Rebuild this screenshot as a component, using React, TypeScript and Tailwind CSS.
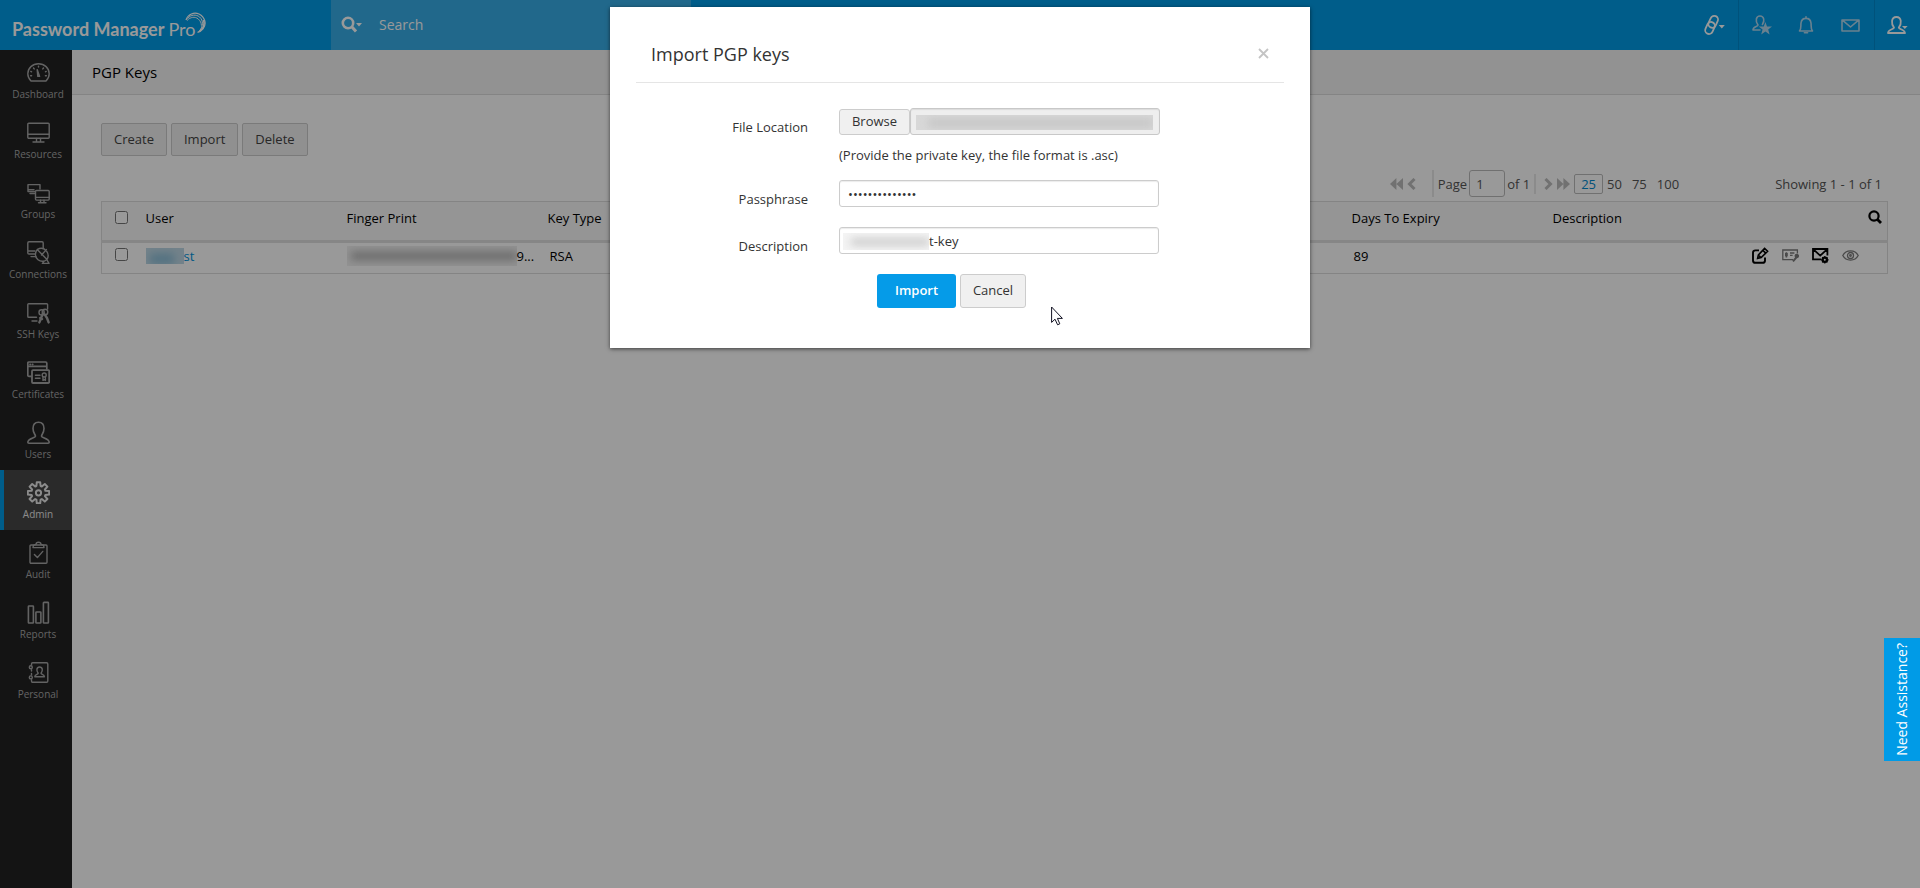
import React, { useState } from 'react';

const svgProps = {
  fill: 'none',
  stroke: 'currentColor',
  strokeWidth: 1.4,
  strokeLinejoin: 'round' as const,
  strokeLinecap: 'round' as const,
};

const USER_PATH = 'M8.5 15.2 C8.5 13.6 6 12 6 7.5 C6 3.5 8.2 1.2 11.5 1.2 S17 3.5 17 7.5 C17 12 14.5 13.6 14.5 15.2 C14.5 17 22.2 17.4 22.2 21.3 C22.2 22 21.8 22.2 21 22.2 H2 C1.2 22.2 .8 22 .8 21.3 C.8 17.4 8.5 17 8.5 15.2 Z';

const navItems = [
  {
    label: 'Dashboard',
    icon: (
      <>
        <path d="M4 20 C1.5 17.5 .8 15 .8 12.8 C.8 7 5.5 2.8 11.5 2.8 S22.2 7 22.2 12.8 C22.2 15 21.5 17.5 19 20 Z" />
        <path d="M10.2 8.6 L10.8 15.4 L12.6 15.4 Z M11.5 5.1 V6 M6.5 7 L7.2 7.9 M16.5 7 L15.8 7.9 M3.8 10.4 L4.6 10.8 M19.2 10.4 L18.4 10.8 M3.6 14.8 H4.6 M18.4 14.8 H19.4" />
      </>
    ),
  },
  {
    label: 'Resources',
    icon: (
      <>
        <rect x=".8" y="2.2" width="21.4" height="15" rx="1" />
        <path d="M1 13.2 H22 M9.5 17.4 V20.4 M13.5 17.4 V20.4 M6 21 H17" />
      </>
    ),
  },
  {
    label: 'Groups',
    icon: (
      <>
        <path d="M8 10.5 H1 V3.6 H13 V8 M1.5 8.6 H7 M3 12.5 H7.5" />
        <rect x="8.5" y="9.5" width="13.7" height="9.6" rx="1" />
        <path d="M8.8 16.4 H22 M13.5 19.2 V21.4 M17 19.2 V21.4 M11.5 21.8 H19" />
      </>
    ),
  },
  {
    label: 'Connections',
    icon: (
      <>
        <path d="M8 13 H2 C1.2 13 .8 12.6 .8 12 V2 C.8 1.2 1.2 .8 2 .8 H15 C15.8 .8 16.2 1.2 16.2 2 V7 M1 10 H8 M4 15.6 H9" />
        <path d="M10.2 8.6 C7.5 12 8 16.5 11 18.8 C14 21 18 20.6 20 18.4 Z M10.2 8.6 C14 6.5 17.5 7.5 19.6 10.2 C21.5 13 21.5 16 20 18.4 M14.5 14 L19.4 8.6 M17 20.4 L15.4 22.4 H22 L20 19" />
      </>
    ),
  },
  {
    label: 'SSH Keys',
    icon: (
      <>
        <path d="M9.5 16.2 H1.6 C1 16.2 .8 16 .8 15.4 V3.6 C.8 3 1 2.8 1.6 2.8 H19.6 C20.4 2.8 20.6 3 20.6 3.6 V8 M5 20 H10" />
        <path strokeWidth="2.4" d="M16 12.4 L12.4 21.4 M17.6 13.4 L20 17 L21.6 21.4 M13.2 17 L15 18" />
        <circle cx="14.6" cy="11.4" r="2.6" />
        <circle cx="18" cy="11" r="2.8" />
      </>
    ),
  },
  {
    label: 'Certificates',
    icon: (
      <>
        <path d="M4 15.4 H2 C1.2 15.4 .8 15 .8 14.2 V2.2 C.8 1.4 1.2 1 2 1 H18.6 C19.4 1 19.8 1.4 19.8 2.2 V8 M1 5.4 H19.8 M3 3.3 H3.4 M5.4 3.3 H5.8" strokeWidth="1.7" />
        <rect x="5" y="9.2" width="17.2" height="12.8" rx="1" strokeWidth="1.8" />
        <path d="M8.4 14.2 H13 M8.4 17.2 H13 M16 16 V19.4 L17.2 18.6 L18.4 19.4 V16" />
        <circle cx="17.2" cy="14" r="2" />
      </>
    ),
  },
  { label: 'Users', icon: <path d={USER_PATH} strokeWidth="1.6" /> },
  {
    label: 'Admin',
    icon: (
      <g strokeWidth="2">
        <path d="M9.8 1.2 H13.2 L13.6 5 L14.8 5.5 L17.8 3 L20.4 5.6 L17.9 8.5 L18.4 9.8 L22.2 10.1 V13.5 L18.4 13.9 L17.9 15.1 L20.4 18 L17.8 20.6 L14.8 18.1 L13.6 18.6 L13.2 22.3 H9.8 L9.4 18.6 L8.2 18.1 L5.2 20.6 L2.6 18 L5.1 15.1 L4.6 13.9 L.8 13.5 V10.1 L4.6 9.8 L5.1 8.5 L2.6 5.6 L5.2 3 L8.2 5.5 L9.4 5 Z" />
        <circle cx="11.5" cy="11.8" r="2.6" />
      </g>
    ),
  },
  {
    label: 'Audit',
    icon: (
      <>
        <rect x="3" y="4" width="17" height="18.2" rx="1" />
        <path d="M6.4 4.4 L6 6.6 H17 L16.6 4.4 L14 3.4 C13.8 .6 9.2 .6 9 3.4 Z M7.4 13.4 L10.4 16.6 L15.8 10.4" />
      </>
    ),
  },
  {
    label: 'Reports',
    icon: (
      <g strokeWidth="1.6">
        <rect x="1.4" y="5" width="5" height="17" rx=".6" />
        <rect x="8.9" y="11" width="5" height="11" rx=".6" />
        <rect x="16.4" y="1.4" width="5" height="20.6" rx=".6" />
      </g>
    ),
  },
  {
    label: 'Personal',
    icon: (
      <>
        <path d="M4.5 4 V3 C4.5 2.2 5 1.8 5.6 1.8 H19.6 C20.4 1.8 20.8 2.2 20.8 3 V20 C20.8 20.8 20.4 21.2 19.6 21.2 H5.6 C5 21.2 4.5 20.8 4.5 20 V18.6 M4.5 8.6 V10 M4.5 12.4 V14" />
        <circle cx="3.8" cy="6.2" r="1.5" />
        <circle cx="3.8" cy="16.4" r="1.5" />
        <path d="M11.2 12.2 C9 9.6 9.6 6 12.6 6 S16.2 9.6 14 12.2 C14.2 13.6 17.4 13 17.4 15.8 H7.8 C7.8 13 11 13.6 11.2 12.2 Z" />
      </>
    ),
  },
];

function Sidebar() {
  return (
    <nav className="w-[72px] shrink-0 bg-[#222222]">
      {navItems.map((item) => {
        const active = item.label === 'Admin';
        return (
          <a
            key={item.label}
            href="#"
            className={`flex h-[60px] flex-col items-center border-l-4 pt-[11px] ${
              active ? 'border-[#009be7] bg-[#464646] text-[#e8e8e8]' : 'border-transparent text-[#a6a6a6]'
            }`}
          >
            <svg width="23" height="23" viewBox="0 0 23 23" {...svgProps}>{item.icon}</svg>
            <span className="mt-0.5 text-[10px] leading-4 whitespace-nowrap">{item.label}</span>
          </a>
        );
      })}
    </nav>
  );
}

function Header() {
  return (
    <header className="flex h-[50px] items-stretch bg-[#009be7] text-white">
      <div className="flex w-[331px] shrink-0 items-center pl-3">
        <span className="mt-2 font-['Lato',sans-serif] text-lg leading-6 font-bold whitespace-nowrap">
          Password Manager <span className="font-normal">Pro</span>
        </span>
        <svg className="-ml-2.5 mb-1" width="22" height="22" viewBox="0 0 22 22" fill="none" stroke="currentColor">
          <path d="M1 8 C3 2 9 0 14 2 C20 5 22 12 18 17 C16.5 19 15 19.8 12.5 20.4" strokeWidth="1.2" />
          <path d="M2.5 6.5 C6 2.4 11 2.2 14.6 5 C18.6 8.4 18.6 14.6 13.5 20" strokeWidth="1" />
          <path d="M2 8.6 C5.4 4.8 10 4.4 13 6.8 C15.4 8.8 16.4 11 16.4 13.6" strokeWidth=".9" />
          <path d="M18.6 8 C19.8 12 18.6 16.4 14.6 19.2" strokeWidth="1.6" />
        </svg>
      </div>
      <div className="flex w-[360px] shrink-0 items-center bg-[#37aee8] pl-2.5">
        <button aria-label="Search scope" className="flex items-center">
          <svg width="22" height="18" viewBox="0 0 22 18" fill="none" stroke="currentColor">
            <circle cx="7" cy="7" r="5.2" strokeWidth="2.6" />
            <path d="M11 11 L15 15.6" strokeWidth="3" />
            <path d="M15 7 H21 L18 10.4 Z" fill="currentColor" stroke="none" />
          </svg>
        </button>
        <input
          aria-label="Search"
          placeholder="Search"
          className="ml-4 w-60 bg-transparent text-sm outline-none placeholder:text-white"
        />
      </div>
      <div className="ml-auto flex items-center">
        <button aria-label="Links" className="flex w-12 justify-center">
          <svg width="22" height="22" viewBox="0 0 22 22" {...svgProps} strokeWidth="1.8">
            <rect x="6.4" y="1.6" width="7.6" height="12.4" rx="3.8" transform="rotate(25 10.2 7.8)" />
            <rect x="3.2" y="7.8" width="7.6" height="12.4" rx="3.8" transform="rotate(25 7 14)" />
            <path d="M15.8 11 H21.8 L18.8 14.6 Z" fill="currentColor" stroke="none" />
          </svg>
        </button>
        <div className="flex h-full items-center border-x border-[#0089cd] text-[#b0d8ee]">
          <button aria-label="Favorites" className="flex w-[45px] justify-center">
            <svg width="20" height="20" viewBox="0 0 20 20" {...svgProps} strokeWidth="1.6">
              <path d="M8 15 H1 C1 11 6 12 6 10 C3 6 4 1 8 1 S13 6 10.4 9.4" />
              <path d="M13.4 7 L15 11.6 H20 L16.2 14.6 L17.6 19.6 L13.4 16.6 L9.2 19.6 L10.6 14.6 L6.8 11.6 H11.8 Z" fill="currentColor" stroke="none" />
            </svg>
          </button>
          <button aria-label="Notifications" className="flex w-[43px] justify-center">
            <svg width="16" height="18" viewBox="0 0 16 18" {...svgProps} strokeWidth="1.6">
              <path d="M1.5 15 C3.5 12.5 2.6 10 3 7 C3.4 3.8 5.4 2.4 8 2.4 S12.6 3.8 13 7 C13.4 10 12.5 12.5 14.5 15 Z M8 .8 V2.2 M6.4 16.8 H9.6" />
            </svg>
          </button>
          <button aria-label="Messages" className="flex w-[47px] justify-center">
            <svg width="19" height="13" viewBox="0 0 19 13" {...svgProps} strokeWidth="1.6">
              <path d="M1 1 H18 V12 H1 Z M2 1.6 L9.5 8 L17 1.6" />
            </svg>
          </button>
        </div>
        <button aria-label="Account" className="flex w-[45px] justify-center">
          <svg width="21" height="18" viewBox="0 0 21 18" {...svgProps} strokeWidth="1.8">
            <path d="M7 11.6 C4 8 4 1 9.4 1 S14.8 8 11.8 11.6 C12 13.6 17.6 13 18 17 H1 C1.2 13 6.8 13.6 7 11.6 Z" />
            <path d="M15 10 H20.6 L17.8 13 Z" fill="currentColor" stroke="none" />
          </svg>
        </button>
      </div>
    </header>
  );
}

function Pager() {
  return (
    <div className="flex items-center text-[13px] leading-5 text-[#555555]">
      <div className="flex items-center gap-1">
        <button aria-label="First page">
          <svg width="13" height="12" viewBox="0 0 13 12" fill="#bdbdbd"><path d="M6.4 0 L0 6 L6.4 12 Z M13 0 L6.4 6 L13 12 Z" /></svg>
        </button>
        <button aria-label="Previous page">
          <svg width="9" height="12" viewBox="0 0 9 12" fill="none" stroke="#bdbdbd" strokeWidth="3"><path d="M7.5 1 L2.5 6 L7.5 11" /></svg>
        </button>
      </div>
      <label className="ml-4 flex items-center border-l-2 border-[#e8e8e8] pl-1">
        Page
        <input defaultValue="1" className="ml-0.5 h-[27px] w-9 rounded-[3px] border border-[#bbbbbb] px-1.5 text-[13px]" />
      </label>
      <span className="ml-0.5 border-r-2 border-[#e8e8e8] pr-1">of 1</span>
      <div className="ml-2 flex items-center gap-1">
        <button aria-label="Next page">
          <svg width="9" height="12" viewBox="0 0 9 12" fill="none" stroke="#bdbdbd" strokeWidth="3"><path d="M1.5 1 L6.5 6 L1.5 11" /></svg>
        </button>
        <button aria-label="Last page">
          <svg width="13" height="12" viewBox="0 0 13 12" fill="#bdbdbd"><path d="M0 0 L6.4 6 L0 12 Z M6.4 0 L13 6 L6.4 12 Z" /></svg>
        </button>
      </div>
      <button className="ml-1 h-5 rounded-xs border border-[#bbbbbb] px-1.5 leading-4 text-[#0089cd]">25</button>
      <div className="ml-1 flex items-center gap-2.5">
        <button>50</button>
        <button>75</button>
        <button>100</button>
      </div>
      <span className="ml-24 whitespace-nowrap">Showing 1 - 1 of 1</span>
    </div>
  );
}

function RowActions() {
  return (
    <div className="flex items-center gap-[13px] pl-2">
      <button aria-label="Edit">
        <svg width="17" height="17" viewBox="0 0 17 17" fill="none" stroke="#000" strokeWidth="1.9">
          <path d="M7 3.4 H3.4 Q1 3.4 1 5.8 V13.4 Q1 15.8 3.4 15.8 H10.6 Q13 15.8 13 13.4 V10.4" />
          <path d="M5.6 11.4 L6.4 8 L12.6 1.4 L15.6 4.2 L9.2 10.6 Z" strokeWidth="1.6" />
          <path d="M10.8 3.4 L13.8 6.2 M7 8.6 L8.6 10.2" strokeWidth="1.6" />
        </svg>
      </button>
      <button aria-label="View details">
        <svg width="17" height="13" viewBox="0 0 17 13" fill="none" stroke="#7c7c7c" strokeWidth="1.3">
          <path d="M11 10.6 H.8 V1 H15.4 V4.4" />
          <path d="M4.4 3.2 V8.6 M3 4.8 H5.8 M3 6.4 H5.8" strokeWidth="1.6" />
          <path d="M8 4 H12.4 M8 6.4 H10.6" />
          <path d="M11 12.4 L14.4 8.4" strokeWidth="2" />
          <circle cx="14.8" cy="7" r="1.6" fill="#7c7c7c" />
        </svg>
      </button>
      <button aria-label="Email key">
        <svg width="17" height="17" viewBox="0 0 17 17" fill="none" stroke="#000" strokeWidth="1.8">
          <path d="M9 12.4 H1 V2 H15.4 V8.4 M1.4 2.4 L8.2 8.6 L15 2.4" />
          <circle cx="12.8" cy="12.8" r="2.2" strokeWidth="2.2" />
          <path d="M12.8 9 V16.6 M9 12.8 H16.6 M10.2 10.2 L15.4 15.4 M15.4 10.2 L10.2 15.4" strokeWidth="1.2" />
          <circle cx="12.8" cy="12.8" r="1" fill="#fff" stroke="none" />
        </svg>
      </button>
      <button aria-label="View key">
        <svg width="17" height="11" viewBox="0 0 17 11" fill="none" stroke="#7c7c7c" strokeWidth="1.3">
          <path d="M.8 5.5 C4 -.6 13 -.6 16.2 5.5 C13 11.6 4 11.6 .8 5.5 Z" />
          <circle cx="8.5" cy="5.5" r="3" />
          <circle cx="8.5" cy="5.5" r=".8" />
        </svg>
      </button>
    </div>
  );
}

function KeysTable() {
  return (
    <table className="w-full table-fixed border border-[#dcdcdc] text-left text-[13px] leading-5 text-black">
      <thead>
        <tr className="h-10 border-b-3 border-[#e0e0e0] bg-[#f8f8f8]">
          <th className="w-[44px] pb-2 pl-[13px]"><input type="checkbox" aria-label="Select all" className="block size-[13px]" /></th>
          <th className="w-[201px] pb-1.5 font-normal">User</th>
          <th className="w-[201px] pb-1.5 font-normal">Finger Print</th>
          <th className="w-[201px] pb-1.5 font-normal">Key Type</th>
          <th colSpan={3} className="w-[603px]"></th>
          <th className="w-[201px] pb-1.5 font-normal">Days To Expiry</th>
          <th className="pb-1.5 font-normal">Description</th>
          <th className="w-[144px] pr-[5px] pb-2">
            <button aria-label="Search table" className="ml-auto block">
              <svg width="14" height="14" viewBox="0 0 14 14" fill="none" stroke="#000" strokeWidth="2.2">
                <circle cx="6" cy="6" r="4.6" />
                <path d="M9 9 L13 13" strokeWidth="2.8" />
              </svg>
            </button>
          </th>
        </tr>
      </thead>
      <tbody>
        <tr className="h-8">
          <td className="pb-2 pl-[13px]"><input type="checkbox" aria-label="Select key" className="block size-[13px]" /></td>
          <td className="pb-1">
            <a href="#" className="flex items-center text-[#0094dd]">
              <span className="h-4 w-[38px] overflow-hidden bg-[#c0d9e6]">
                <span className="mt-1.5 ml-1 block h-2.5 w-6 bg-[#86bbd6] blur-[4px]" />
              </span>
              st
            </a>
          </td>
          <td className="pb-1">
            <div className="flex items-center">
              <span className="h-5 w-[170px] overflow-hidden bg-[#f4f4f4]">
                <span className="mt-1.5 ml-1 block h-2 bg-[#adadad] blur-[4px]" />
              </span>
              9...
            </div>
          </td>
          <td className="pb-1 pl-0.5">RSA</td>
          <td colSpan={3}></td>
          <td className="pb-1 pl-0.5">89</td>
          <td></td>
          <td className="pb-1.5"><RowActions /></td>
        </tr>
      </tbody>
    </table>
  );
}

const labelClass = 'w-[172px] shrink-0 pt-[9px] text-right leading-5';
const fieldClass = 'block h-[27px] w-80 rounded-[3px] border border-[#cccccc] shadow-[inset_0_1px_1px_rgba(0,0,0,0.08)] outline-none';

function ImportDialog() {
  const [passphrase, setPassphrase] = useState('privatekeypass');
  const [description, setDescription] = useState('t-key');

  return (
    <div
      role="dialog"
      aria-label="Import PGP keys"
      className="absolute top-[7px] left-1/2 w-[700px] -translate-x-1/2 bg-white px-[26px] pb-10 text-[13px] text-[#333333] shadow-[0_1px_4px_rgba(0,0,0,0.6)]"
    >
      <div className="flex h-19 items-center justify-between border-b border-[#e5e5e5] px-[15px] pt-[18px]">
        <h2 className="text-lg">Import PGP keys</h2>
        <button aria-label="Close" className="text-[#c4c4c4]">
          <svg width="11" height="11" viewBox="0 0 11 11" fill="none" stroke="currentColor" strokeWidth="1.8">
            <path d="M1 1 L10 10 M10 1 L1 10" />
          </svg>
        </button>
      </div>
      <form className="pt-[25px]" onSubmit={(e) => e.preventDefault()}>
        <div className="flex gap-[31px]">
          <label htmlFor="file" className={labelClass}>File Location</label>
          <div>
            <div className="flex items-end">
              <button type="button" className="h-[26px] w-[71px] rounded-[3px] border border-[#cccccc] bg-[#f0f0f0]">Browse</button>
              <div className="relative">
                <input id="file" readOnly className="block h-[27px] w-[250px] rounded-[3px] border border-[#c8c8c8] bg-[#eeeeee] px-2 shadow-[inset_0_1px_1px_rgba(0,0,0,0.08)]" />
                <div className="absolute top-[7px] left-1.5 h-[15px] w-[237px] overflow-hidden bg-[#d8d8d8]">
                  <div className="mt-1 ml-3 h-2 bg-[#c4c4c4] blur-[4px]" />
                </div>
              </div>
            </div>
            <p className="mt-2.5 leading-5">(Provide the private key, the file format is .asc)</p>
          </div>
        </div>
        <div className="mt-[15px] flex gap-[31px]">
          <label htmlFor="passphrase" className={labelClass}>Passphrase</label>
          <input
            id="passphrase"
            type="password"
            value={passphrase}
            onChange={(e) => setPassphrase(e.target.value)}
            className={`${fieldClass} px-2`}
          />
        </div>
        <div className="mt-[18px] flex gap-[31px]">
          <label htmlFor="description" className={labelClass}>Description</label>
          <div className="relative">
            <input
              id="description"
              value={description}
              onChange={(e) => setDescription(e.target.value)}
              className={`${fieldClass} pl-[89px]`}
            />
            <div className="absolute top-1.5 left-1 h-[17px] w-[86px] overflow-hidden bg-[#f4f4f4]">
              <div className="mt-1.5 ml-2 h-1.5 bg-[#c2c2c2] blur-[4px]" />
            </div>
          </div>
        </div>
        <div className="mt-[18px] flex gap-1 pl-[241px]">
          <button type="submit" className="h-[34px] w-[79px] rounded-[3px] bg-[#059be8] font-semibold text-white">Import</button>
          <button type="button" className="h-[34px] w-[66px] rounded-[3px] border border-[#cccccc] bg-[#f0f0f0]">Cancel</button>
        </div>
      </form>
      <svg className="absolute top-[299px] left-[441px]" width="13" height="20" viewBox="0 0 13 20" fill="#fff" stroke="#111122" strokeWidth="1">
        <path d="M.6 1 V16.4 L4 13.2 L6.6 18.8 L8.8 17.8 L6.4 12.4 H11.4 Z" />
      </svg>
    </div>
  );
}

const toolButton = 'h-[33px] rounded-xs border border-[#cccccc] bg-[#f0f0f0] px-3 text-[13px] text-[#444444]';

export default function App() {
  return (
    <div className="relative flex min-h-screen flex-col bg-white font-['Open_Sans',sans-serif]">
      <Header />
      <div className="flex grow">
        <Sidebar />
        <main className="min-w-0 grow">
          <h1 className="border-b border-[#dddddd] bg-[#f4f4f4] px-5 py-2.5 text-[15px] leading-6">PGP Keys</h1>
          <div className="pt-7 pr-8 pl-[29px]">
            <div className="flex gap-1">
              <button className={toolButton}>Create</button>
              <button className={toolButton}>Import</button>
              <button className={toolButton}>Delete</button>
            </div>
            <div className="mt-3.5 mb-1 flex justify-end pr-1.5"><Pager /></div>
            <KeysTable />
          </div>
        </main>
      </div>
      <div className="absolute inset-0 bg-black/40" />
      <ImportDialog />
      <button className="fixed right-0 bottom-[127px] flex h-[123px] w-9 items-center justify-center bg-[#009be7] text-sm font-medium whitespace-nowrap text-white">
        <span className="[writing-mode:sideways-lr]">Need Assistance?</span>
      </button>
    </div>
  );
}
